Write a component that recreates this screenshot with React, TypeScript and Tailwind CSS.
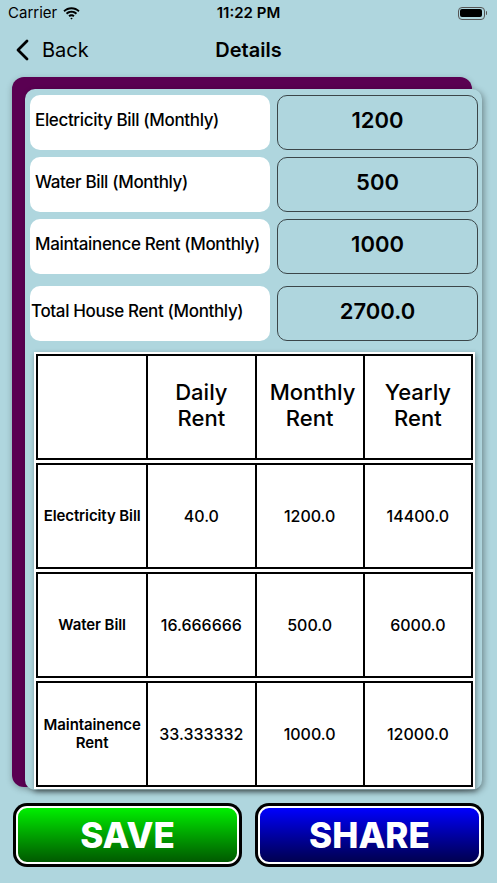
import React from 'react'

const font = { fontFamily: 'Inter, "Liberation Sans", sans-serif' }

const inputs = [
  { label: 'Electricity Bill (Monthly)', value: '1200' },
  { label: 'Water Bill (Monthly)', value: '500' },
  { label: 'Maintainence Rent (Monthly)', value: '1000' },
]

const rows = [
  { name: 'Electricity Bill', daily: '40.0', monthly: '1200.0', yearly: '14400.0' },
  { name: 'Water Bill', daily: '16.666666', monthly: '500.0', yearly: '6000.0' },
  { name: 'Maintainence Rent', daily: '33.333332', monthly: '1000.0', yearly: '12000.0' },
]

function StatusBar() {
  return (
    <div className="relative flex h-[26px] items-center px-[8px] text-[15px] text-black">
      <div className="flex items-center gap-[6px]">
        <span>Carrier</span>
        <svg width="17" height="13" viewBox="0 0 17 13">
          <path d="M8.5 2.2c2.6 0 5 1 6.8 2.7l1.3-1.4C14.4 1.4 11.6.2 8.5.2S2.6 1.4.4 3.5l1.3 1.4C3.5 3.2 5.9 2.2 8.5 2.2z" fill="#000" />
          <path d="M8.5 5.8c1.6 0 3.1.6 4.3 1.7l1.3-1.4C12.6 4.6 10.6 3.8 8.5 3.8S4.4 4.6 2.9 6.1l1.3 1.4C5.4 6.4 6.9 5.8 8.5 5.8z" fill="#000" />
          <path d="M8.5 9.3c.7 0 1.3.3 1.8.7l1.3-1.4c-.9-.8-1.9-1.3-3.1-1.3s-2.2.5-3.1 1.3l1.3 1.4c.5-.4 1.1-.7 1.8-.7z" fill="#000" />
          <path d="M8.5 12.6l1.2-1.3c-.3-.3-.7-.5-1.2-.5s-.9.2-1.2.5z" fill="#000" />
        </svg>
      </div>
      <span className="absolute left-1/2 -translate-x-1/2 font-semibold">11:22 PM</span>
      <div className="ml-auto flex items-center pr-[2px]">
        <div className="flex h-[13px] w-[27px] items-center rounded-[4px] border border-[#555] p-[1.5px]">
          <div className="h-full w-full rounded-[2px] bg-black" />
        </div>
        <div className="ml-[1px] h-[4px] w-[1.5px] rounded-r bg-[#555]" />
      </div>
    </div>
  )
}

function NavBar() {
  return (
    <div className="relative flex h-[48px] items-center px-[15px]">
      <svg width="15" height="22" viewBox="0 0 15 22">
        <path d="M12 2L3 11l9 9" fill="none" stroke="#000" strokeWidth="2.8" strokeLinecap="round" strokeLinejoin="round" />
      </svg>
      <span className="ml-[12px] text-[20px] text-black">Back</span>
      <span className="absolute left-1/2 -translate-x-1/2 text-[20px] font-semibold text-black">Details</span>
    </div>
  )
}

function InputRow({ label, value, tight }: { label: string; value: string; tight?: boolean }) {
  return (
    <div className="flex h-[55px] gap-[7px]">
      <div
        className={`flex w-[240px] items-center rounded-[10px] bg-white pb-[3px] text-[17px] font-medium tracking-[-0.35px] text-black ${
          tight ? 'pl-[1px]' : 'pl-[5px]'
        }`}
      >
        {label}
      </div>
      <div className="flex flex-1 items-center justify-center rounded-[10px] border-[1.5px] border-[#3b4649] pb-[4px] text-[22px] font-semibold text-black">
        {value}
      </div>
    </div>
  )
}

function TableRow({ cells, header }: { cells: string[]; header?: boolean }) {
  return (
    <div className="grid h-[106px] grid-cols-4 border-2 border-black">
      {cells.map((c, i) => (
        <div
          key={i}
          className={`flex items-center justify-center px-[2px] text-center text-black ${i > 0 ? 'border-l-2 border-black' : ''} ${
            header
              ? 'pb-[4px] text-[22px] font-medium leading-[26px]'
              : i === 0
                ? 'text-[15px] font-semibold leading-[18px] tracking-[-0.1px]'
                : 'text-[16px] font-medium'
          }`}
        >
          {header && c ? <span className="w-[80px]">{c}</span> : c}
        </div>
      ))}
    </div>
  )
}

export default function App() {
  return (
    <div className="flex h-[883px] w-[497px] flex-col overflow-hidden bg-[#afd6de]" style={font}>
      <StatusBar />
      <NavBar />
      <div className="ml-[12px] mt-[3px] w-[460px] rounded-[12px] bg-[#5a0052] pl-[13px] pt-[12px] shadow-[0_2px_6px_rgba(0,0,0,0.25)]">
        <div className="-mb-[3px] -mr-[10px] flex flex-col rounded-[10px] bg-[#afd6de] pb-[1px] pl-[5px] pr-[4px] pt-[6px] shadow-[2px_2px_6px_rgba(0,0,0,0.35)]">
          <div className="flex flex-col gap-[7px]">
            {inputs.map((r) => (
              <InputRow key={r.label} label={r.label} value={r.value} />
            ))}
          </div>
          <div className="mt-[12px]">
            <InputRow label="Total House Rent (Monthly)" value="2700.0" tight />
          </div>
          <div className="ml-[4px] mr-[3px] mt-[11px] flex flex-col gap-[3px] bg-white p-[2px] shadow-[1px_2px_5px_rgba(0,0,0,0.4)]">
            <TableRow header cells={['', 'Daily Rent', 'Monthly Rent', 'Yearly Rent']} />
            {rows.map((r) => (
              <TableRow key={r.name} cells={[r.name, r.daily, r.monthly, r.yearly]} />
            ))}
          </div>
        </div>
      </div>
      <div className="mt-[16px] flex gap-[13px] px-[13px]">
        <button className="h-[64px] flex-1 rounded-[14px] bg-black p-[3px]">
          <div className="flex h-full items-center justify-center rounded-[11px] border-2 border-white bg-gradient-to-b from-[#00f000] to-[#005a00] text-[35px] font-extrabold text-white">
            SAVE
          </div>
        </button>
        <button className="h-[64px] flex-1 rounded-[14px] bg-black p-[3px]">
          <div className="flex h-full items-center justify-center rounded-[11px] border-2 border-white bg-gradient-to-b from-[#0000ff] to-[#000050] text-[35px] font-extrabold text-white">
            SHARE
          </div>
        </button>
      </div>
    </div>
  )
}
